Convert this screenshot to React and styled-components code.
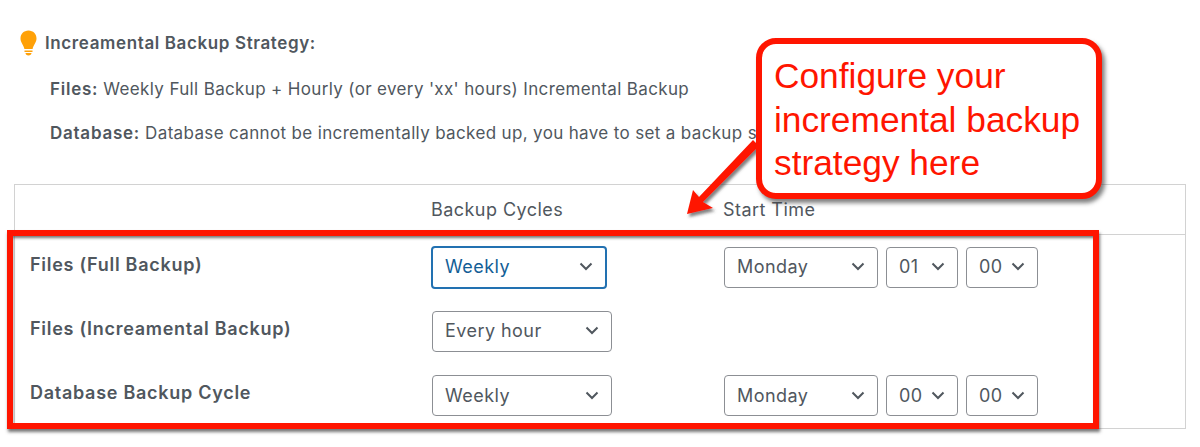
import React from "react";
import styled, { createGlobalStyle } from "styled-components";

const Global = createGlobalStyle`
  html, body { margin: 0; padding: 0; background: #fff; }
  body { font-family: Inter, "Noto Sans", "Liberation Sans", sans-serif; color: #50575e; overflow: hidden; }
`;
const Page = styled.div`
  position: relative;
  width: 1200px;
  height: 447px;
  padding: 29px 14px 0;
  box-sizing: border-box;
  overflow: hidden;
`;
const Heading = styled.div`
  display: flex;
  align-items: center;
  gap: 8px;
  padding-left: 6px;
  height: 28px;
  font-size: 17px;
  font-weight: 600;
  letter-spacing: 0.62px;
  color: #50575e;
`;
const HeadingText = styled.span`
  position: relative;
  top: 0;
`;
const Note = styled.p`
  margin: 0;
  padding: 20px 0 0 36px;
  font-size: 17px;
  letter-spacing: 0.35px;
  line-height: 24px;
  white-space: nowrap;
  b { font-weight: 600; letter-spacing: 0.75px; }
`;
const Table = styled.div`
  margin-top: 39px;
  width: 1172px;
  height: 245px;
  box-sizing: border-box;
  border: 1px solid #d2d2d2;
`;
const HeadRow = styled.div`
  display: grid;
  grid-template-columns: 416px 292px 1fr;
  height: 50px;
  align-items: center;
  box-sizing: border-box;
  border-bottom: 1px solid #d2d2d2;
  font-size: 18px;
  letter-spacing: 0.45px;
`;
const Row = styled.div`
  display: grid;
  grid-template-columns: 417px 292px 1fr;
  height: ${p => p.$h}px;
  align-items: center;
`;
const RowLabel = styled.div`
  padding-left: 15px;
  font-size: 18px;
  font-weight: 600;
  letter-spacing: 0.72px;
  position: relative;
  top: -3px;
  white-space: nowrap;
`;
const Cols = styled.div`
  display: flex;
  gap: 8px;
`;
const Select = styled.div`
  box-sizing: border-box;
  width: ${p => p.$w}px;
  height: ${p => (p.$focus ? 43 : 41)}px;
  margin-left: ${p => (p.$focus ? -1 : 0)}px;
  padding: 0 12px 1px 12px;
  display: flex;
  align-items: center;
  justify-content: space-between;
  border: ${p => (p.$focus ? "2px solid #2271b1" : "1px solid #8c8f94")};
  border-radius: 4px;
  color: ${p => (p.$focus ? "#135e96" : "#50575e")};
  font-size: 18px;
  letter-spacing: 0.45px;
  background: #fff;
`;
const Callout = styled.div`
  position: absolute;
  left: 756px;
  top: 38px;
  width: 346px;
  height: 161px;
  box-sizing: border-box;
  border: 6px solid #ff1500;
  border-radius: 20px;
  background: #fff;
  box-shadow: 3px 4px 4px rgba(60, 60, 60, 0.65);
  padding: 10px 12px;
  color: #ff1500;
  font-family: "Liberation Sans", Arial, sans-serif;
  font-size: 35.3px;
  line-height: 43.5px;
  white-space: nowrap;
`;
const Frame = styled.div`
  position: absolute;
  left: 7px;
  top: 230px;
  width: 1092px;
  height: 199px;
  box-sizing: border-box;
  border: 6px solid #ff1500;
  box-shadow: 1px 3px 3px rgba(60, 60, 60, 0.7), inset 1px 3px 3px -1px rgba(60, 60, 60, 0.7);
`;
const Arrow = styled.svg`
  position: absolute;
  left: 670px;
  top: 130px;
  overflow: visible;
`;

const Chevron = () => (
  <svg width="14" height="9" viewBox="0 0 14 9" fill="none">
    <path d="M1.5 1.5 L7 7 L12.5 1.5" stroke="#50575e" strokeWidth="2" />
  </svg>
);
const Bulb = () => (
  <svg width="17" height="26" viewBox="0 0 17 26">
    <path fill="#ffa108" d="M8.5 0.5C3.8 0.5 0.5 4.1 0.5 8.4c0 4.2 3.2 6.4 3.9 10.6h8.2c.7-4.2 3.9-6.4 3.9-10.6C16.5 4.1 13.2.5 8.5.5z" />
    <path fill="#ffa108" d="M4.5 20.5h8v1.5h-8zM5.5 23h6c0 1.5-1.3 2.5-3 2.5s-3-1-3-2.5z" />
  </svg>
);
const Sel = ({ w, focus, children }) => (
  <Select $w={w} $focus={focus}>
    <span>{children}</span>
    <Chevron />
  </Select>
);
const TimeSelects = ({ h }) => (
  <Cols>
    <Sel w={154}>Monday</Sel>
    <Sel w={72}>{h}</Sel>
    <Sel w={72}>00</Sel>
  </Cols>
);

export default function App() {
  return (
    <Page>
      <Global />
      <Heading>
        <Bulb />
        <HeadingText>Increamental Backup Strategy:</HeadingText>
      </Heading>
      <Note><b>Files:</b> Weekly Full Backup + Hourly (or every 'xx' hours) Incremental Backup</Note>
      <Note><b>Database:</b> Database cannot be incrementally backed up, you have to set a backup schedule</Note>
      <Table>
        <HeadRow>
          <span />
          <span>Backup Cycles</span>
          <span>Start Time</span>
        </HeadRow>
        <Row $h={64}>
          <RowLabel>Files (Full Backup)</RowLabel>
          <Sel w={176} focus>Weekly</Sel>
          <TimeSelects h="01" />
        </Row>
        <Row $h={64}>
          <RowLabel>Files (Increamental Backup)</RowLabel>
          <Sel w={180}>Every hour</Sel>
          <span />
        </Row>
        <Row $h={65}>
          <RowLabel>Database Backup Cycle</RowLabel>
          <Sel w={180}>Weekly</Sel>
          <TimeSelects h="00" />
        </Row>
      </Table>
      <Frame />
      <Arrow width="90" height="90" viewBox="0 0 90 90">
        <defs>
          <filter id="s" x="-30%" y="-30%" width="170%" height="170%">
            <feDropShadow dx="2" dy="3" stdDeviation="1.5" floodColor="#3c3c3c" floodOpacity="0.65" />
          </filter>
        </defs>
        <path filter="url(#s)" fill="#ff1500" d="M83 10 L89 16 L33 72 L43 78 L17 84 L23 60 L29 67 Z" />
      </Arrow>
      <Callout>Configure your<br />incremental backup<br />strategy here</Callout>
    </Page>
  );
}
